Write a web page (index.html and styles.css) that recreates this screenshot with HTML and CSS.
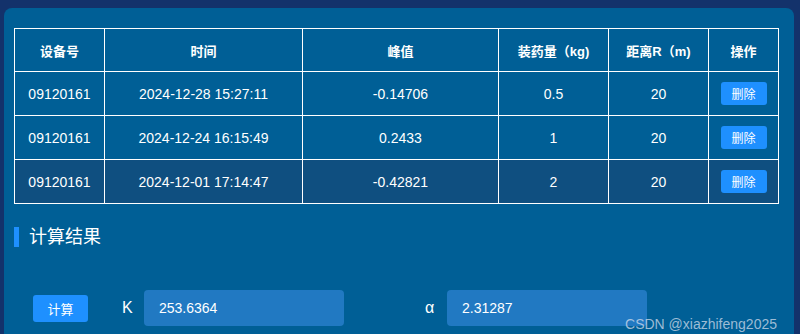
FILE: index.html
```html
<!DOCTYPE html>
<html>
<head>
    <title>计算结果</title>
    <link rel="stylesheet" href="styles.css">
</head>
<body>
    <div class="panel">
        <table class="dataTable">
            <thead>
                <tr>
                    <th class="colId">设备号</th>
                    <th class="colTime">时间</th>
                    <th class="colPeak">峰值</th>
                    <th class="colCharge">装药量（kg)</th>
                    <th class="colDist">距离R（m)</th>
                    <th class="colOp">操作</th>
                </tr>
            </thead>
            <tbody>
                <tr>
                    <td>09120161</td>
                    <td>2024-12-28 15:27:11</td>
                    <td>-0.14706</td>
                    <td>0.5</td>
                    <td>20</td>
                    <td><button class="btnSmall">删除</button></td>
                </tr>
                <tr>
                    <td>09120161</td>
                    <td>2024-12-24 16:15:49</td>
                    <td>0.2433</td>
                    <td>1</td>
                    <td>20</td>
                    <td><button class="btnSmall">删除</button></td>
                </tr>
                <tr class="active">
                    <td>09120161</td>
                    <td>2024-12-01 17:14:47</td>
                    <td>-0.42821</td>
                    <td>2</td>
                    <td>20</td>
                    <td><button class="btnSmall">删除</button></td>
                </tr>
            </tbody>
        </table>

        <h2 class="sectionTitle">计算结果</h2>

        <div class="calcRow">
            <button class="btnCalc">计算</button>
            <label class="field">
                <span class="fieldLabel">K</span>
                <span class="fieldValue">253.6364</span>
            </label>
            <label class="field">
                <span class="fieldLabel">α</span>
                <span class="fieldValue">2.31287</span>
            </label>
        </div>

        <div class="watermark">CSDN @xiazhifeng2025</div>
    </div>
</body>
</html>
```

FILE: styles.css
```css
html, body {
    padding: 0;
    margin: 0;
    font-family: "Liberation Sans", "Noto Sans CJK SC", sans-serif;
}
body {
    background: #13326b;
    width: 800px;
    height: 334px;
    overflow: hidden;
    padding: 8px 6px 0 4px;
    box-sizing: border-box;
}
.panel {
    position: relative;
    background: #005f96;
    border-radius: 8px 8px 0 0;
    height: 326px;
    padding: 20px 15px 0 10px;
    box-sizing: border-box;
    color: white;
}
.dataTable {
    width: 765px;
    border-collapse: collapse;
    border: 1px solid white;
    table-layout: fixed;
}
.dataTable th, .dataTable td {
    border: 1px solid white;
    text-align: center;
    padding: 0;
}
.dataTable th {
    height: 42px;
    font-size: 13px;
    font-weight: bold;
}
.dataTable td {
    height: 43px;
    font-size: 14px;
}
.dataTable tr.active td {
    background: #0f4f80;
}
.colId { width: 89px; }
.colTime { width: 197px; }
.colPeak { width: 195px; }
.colCharge { width: 109px; }
.colDist { width: 99px; }
.btnSmall {
    width: 46px;
    height: 23px;
    border: none;
    border-radius: 3px;
    background: #1e90ff;
    color: white;
    font-size: 12px;
    font-family: inherit;
    padding: 0;
}
.sectionTitle {
    margin: 23px 0 0 0;
    border-left: 5px solid #1e90ff;
    padding-left: 10px;
    height: 20px;
    line-height: 20px;
    font-size: 18px;
    font-weight: normal;
}
.calcRow {
    display: flex;
    align-items: center;
    margin-top: 43px;
    padding-left: 19px;
}
.btnCalc {
    width: 55px;
    height: 27px;
    border: none;
    border-radius: 3px;
    background: #1e90ff;
    color: white;
    font-size: 13px;
    font-family: inherit;
    padding: 0;
    margin-right: 34px;
}
.field {
    display: flex;
    align-items: center;
    margin-right: 81px;
}
.fieldLabel {
    font-size: 16px;
    width: 22px;
}
.fieldValue {
    width: 200px;
    height: 36px;
    line-height: 36px;
    background: #2179c2;
    border-radius: 4px;
    padding-left: 15px;
    box-sizing: border-box;
    font-size: 14px;
}
.watermark {
    position: absolute;
    right: 17px;
    bottom: 2px;
    font-size: 14px;
    color: rgba(210, 220, 235, 0.75);
}
```
